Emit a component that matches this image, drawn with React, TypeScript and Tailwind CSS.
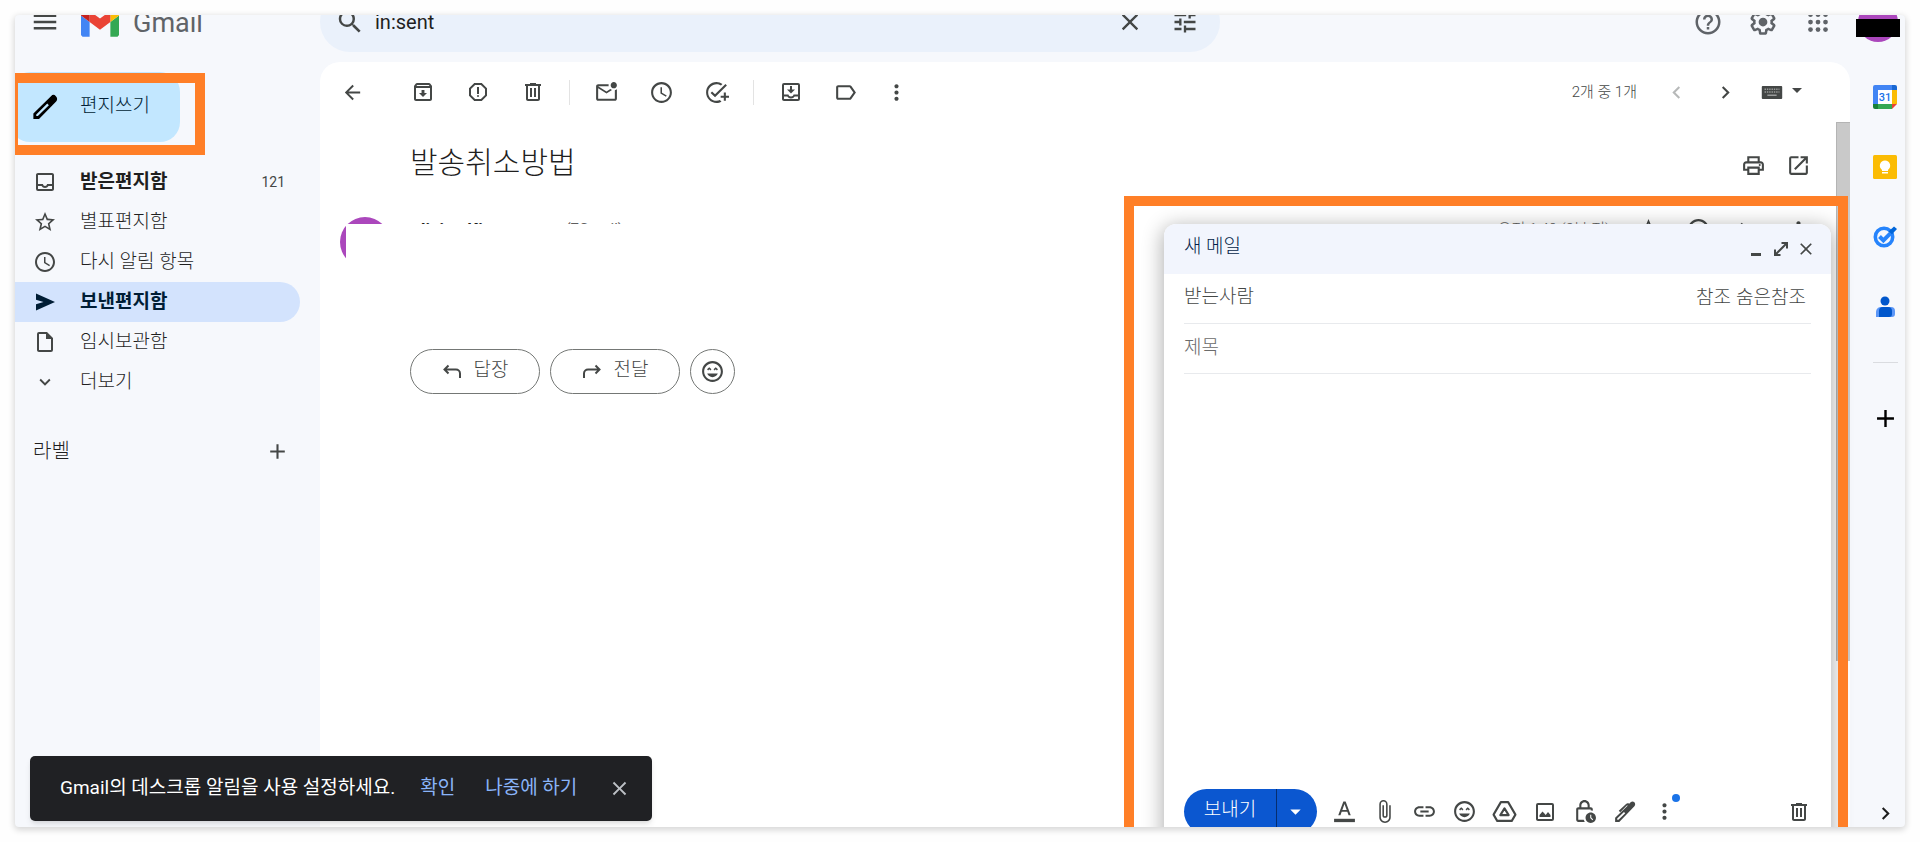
import React from 'react';
import {
    MdAccessTime,
    MdAdd,
    MdArrowBack,
    MdArrowDropDown,
    MdAttachFile,
    MdChevronLeft,
    MdChevronRight,
    MdClose,
    MdExpandMore,
    MdHelpOutline,
    MdLink,
    MdMenu,
    MdMoreVert,
    MdOpenInNew,
    MdOutlineAddTask,
    MdOutlineArchive,
    MdOutlineInbox,
    MdOutlineLabel,
    MdOutlineLockClock,
    MdOutlineMarkEmailUnread,
    MdOutlinePrint,
    MdOutlineReport,
    MdOutlineSentimentVerySatisfied,
    MdSearch,
    MdStarOutline,
    MdTune,
} from 'react-icons/md';

type IconProps = { className?: string };

const GmailLogo = () => (
    <svg viewBox="52 42 88 66" className="h-[29px] w-[38px]" aria-hidden="true">
        <path fill="#4285f4" d="M58 108h14V74L52 59v43c0 3.320 2.690 6 6 6" />
        <path fill="#34a853" d="M120 108h14c3.320 0 6-2.690 6-6V59l-20 15" />
        <path fill="#fbbc04" d="M120 48v26l20-15v-8c0-7.420-8.470-11.650-14.400-7.200" />
        <path fill="#ea4335" d="M72 74V48l24 18 24-18v26L96 92" />
        <path fill="#c5221f" d="M52 51v8l20 15V48l-5.600-4.200c-5.940-4.450-14.400-.22-14.400 7.200" />
    </svg>
);

const GearIcon = () => (
    <svg viewBox="0 0 24 24" className="size-[30px]" fill="currentColor" aria-hidden="true">
        <path
            fillRule="evenodd"
            d="M13.850 22.250h-3.700c-.74 0-1.360-.54-1.450-1.270l-.27-1.890c-.27-.14-.53-.29-.79-.46l-1.800.72c-.7.26-1.470-.03-1.810-.65L2.200 15.530c-.35-.66-.2-1.440.36-1.880l1.530-1.190c-.01-.15-.02-.3-.02-.46 0-.15.01-.31.02-.46l-1.520-1.190c-.59-.45-.74-1.260-.37-1.880l1.850-3.190c.34-.62 1.110-.9 1.790-.63l1.810.73c.26-.17.52-.32.78-.46l.27-1.910c.09-.7.710-1.250 1.440-1.250h3.700c.74 0 1.360.54 1.450 1.270l.27 1.890c.27.14.53.29.79.46l1.800-.72c.71-.26 1.480.03 1.820.65l1.840 3.180c.36.66.2 1.440-.36 1.880l-1.520 1.190c.01.15.02.3.02.46s-.01.31-.02.46l1.520 1.190c.56.45.72 1.230.37 1.860l-1.860 3.220c-.34.62-1.110.9-1.800.63l-1.800-.72c-.26.17-.52.32-.78.46l-.27 1.910c-.1.680-.72 1.220-1.460 1.220zm-3.230-2h2.760l.37-2.550.53-.22c.44-.18.88-.44 1.340-.78l.45-.34 2.380.96 1.380-2.400-2.030-1.580.07-.56c.03-.26.06-.51.06-.78s-.03-.53-.06-.78l-.07-.56 2.030-1.580-1.390-2.400-2.390.96-.45-.35c-.42-.32-.87-.58-1.330-.77l-.52-.22-.37-2.550h-2.760l-.37 2.550-.53.21c-.44.19-.88.44-1.340.79l-.45.33-2.380-.95-1.390 2.390 2.030 1.580-.07.56a7 7 0 0 0-.06.79c0 .26.02.53.06.78l.07.56-2.030 1.580 1.380 2.400 2.390-.96.45.35c.43.33.86.58 1.330.77l.53.22.38 2.550z"
        />
        <circle cx="12" cy="12" r="3.500" />
    </svg>
);

const AppsIcon = () => (
    <svg viewBox="0 0 24 24" className="size-[30px]" fill="currentColor" aria-hidden="true">
        {[6, 12, 18].map((cy) => [6, 12, 18].map((cx) => <circle key={`${cx}-${cy}`} cx={cx} cy={cy} r="1.900" />))}
    </svg>
);

const TrashIcon = ({ className = 'size-[24px]' }: IconProps) => (
    <svg viewBox="0 0 24 24" className={className} fill="currentColor" aria-hidden="true">
        <path fillRule="evenodd" d="M15 4V3H9v1H4v2h1v13c0 1.100.9 2 2 2h10c1.100 0 2-.9 2-2V6h1V4h-5zm2 15H7V6h10v13z" />
        <path d="M9 8h2v9H9zM13 8h2v9h-2z" />
    </svg>
);

const PencilIcon = () => (
    <svg viewBox="0 0 24 24" className="size-[30px]" fill="currentColor" aria-hidden="true">
        <path
            fillRule="evenodd"
            d="M20.700 3.300a2.700 2.700 0 0 0-3.900 0L2.700 17.100v4.400h4.500L20.900 7.500c1.200-1.200 1.100-3-.2-4.200zM6.300 19.200H5v-1.300l8.800-8.700 1.300 1.300z"
        />
    </svg>
);

const MoveToIcon = () => (
    <svg viewBox="0 0 24 24" className="size-[24px]" fill="currentColor" aria-hidden="true">
        <path
            fillRule="evenodd"
            d="M19 3H5a2 2 0 0 0-2 2v14c0 1.100.9 2 2 2h14a2 2 0 0 0 2-2V5a2 2 0 0 0-2-2zm0 16H5v-2.500h3.300c.8 1.200 2.100 2 3.700 2s2.900-.8 3.700-2H19V19zm0-4.500h-4.500c0 1.200-1.200 2-2.500 2s-2.500-.8-2.500-2H5V5h14v9.500z"
        />
        <path d="M16 9.500h-3V6h-2v3.500H8l4 4z" />
    </svg>
);

const KeyboardIcon = () => (
    <svg viewBox="0 0 22 14" className="h-[13px] w-[22px]" aria-hidden="true">
        <rect width="22" height="14" rx="1" fill="#444746" />
        <path d="M3 3.500h16M3 6.500h16" stroke="#9a9c9b" strokeWidth="1.500" strokeDasharray="1.500 1" />
        <path d="M6 10h10" stroke="#9a9c9b" strokeWidth="1.500" />
    </svg>
);

const SendIcon = () => (
    <svg viewBox="0 0 24 24" className="size-[24px]" fill="currentColor" aria-hidden="true">
        <path d="M3 3.500l19 8.500-19 8.500v-6.200l7.500-2.300L3 9.700z" />
    </svg>
);

const FileIcon = () => (
    <svg viewBox="0 0 24 24" className="size-[24px]" fill="currentColor" aria-hidden="true">
        <path fillRule="evenodd" d="M14 2H6a2 2 0 0 0-2 2v16c0 1.100.9 2 2 2h12a2 2 0 0 0 2-2V8zM6 20V4h7v5h5v11z" />
    </svg>
);

const ReplyIcon = ({ className = '' }: IconProps) => (
    <svg
        viewBox="0 0 20 16"
        className={`h-[16px] w-[20px] ${className}`}
        fill="none"
        stroke="currentColor"
        strokeWidth="2"
        aria-hidden="true"
    >
        <path d="M6.500 1.500L2.500 5.500l4 4M2.500 5.500H14a4 4 0 0 1 4 4V14" />
    </svg>
);

const TextFormatIcon = () => (
    <svg viewBox="0 0 24 24" className="size-[25px]" fill="currentColor" aria-hidden="true">
        <path d="M2 19h20v3.200H2z" />
        <path
            fillRule="evenodd"
            d="M10.900 2.500L6 15.500h2.100l1.200-3.300h5.400l1.200 3.300H18l-4.900-13zm-1 8L12 4.700l2.100 5.800z"
        />
    </svg>
);

const DriveIcon = () => (
    <svg
        viewBox="0 0 24 24"
        className="size-[25px]"
        fill="none"
        stroke="currentColor"
        strokeWidth="2"
        strokeLinejoin="round"
        aria-hidden="true"
    >
        <path d="M8.500 3h7L22.500 15l-3.500 6H5l-3.500-6z" />
        <path d="M12 9l4 6.500H8z" />
    </svg>
);

const PhotoIcon = () => (
    <svg viewBox="0 0 24 24" className="size-[24px]" fill="currentColor" aria-hidden="true">
        <path fillRule="evenodd" d="M19 3H5a2 2 0 0 0-2 2v14c0 1.100.9 2 2 2h14a2 2 0 0 0 2-2V5a2 2 0 0 0-2-2zm0 16H5V5h14z" />
        <path d="M6.500 17h11v-2l-2.500-3-2.300 3-1.700-2-1.500-1.500L6.500 15z" />
    </svg>
);

const SignatureIcon = () => (
    <svg viewBox="0 0 24 24" className="size-[25px]" fill="currentColor" aria-hidden="true">
        <path
            fillRule="evenodd"
            d="M21.500 3.200c-1.100-1.100-2.600-1-3.600 0l-1.400 1.300c-1-.7-2.200-.6-3 .2L6.500 11.200l1.400 1.400 6.600-6.600.5.500L3 18v4h4L21.500 7c1-1.100 1-2.700 0-3.800zM6.200 20H5v-1.200l6.500-6.400 1.200 1.200z"
        />
    </svg>
);

const FullscreenIcon = () => (
    <svg viewBox="0 0 16 16" className="size-[16px]" fill="none" stroke="currentColor" strokeWidth="2" aria-hidden="true">
        <path d="M8.500 2H14v5.500M14 2L2 14M7.500 14H2V8.500" />
    </svg>
);

const CalendarIcon = () => (
    <svg viewBox="0 0 24 24" className="size-[24px]" aria-hidden="true">
        <path fill="#fff" d="M4 4h15v15H4z" />
        <path fill="#4285f4" d="M2 0h17v5H5v14H0V2a2 2 0 0 1 2-2z" />
        <path fill="#1967d2" d="M19 0h3a2 2 0 0 1 2 2v3h-5z" />
        <path fill="#fbbc04" d="M19 5h5v14h-5z" />
        <path fill="#34a853" d="M5 19h14v5H5z" />
        <path fill="#188038" d="M0 19h5v5H2a2 2 0 0 1-2-2z" />
        <path fill="#ea4335" d="M19 19h5l-5 5z" />
        <text x="12" y="16" textAnchor="middle" fontSize="11" fontFamily="Roboto" fontWeight="500" fill="#1a73e8">
            31
        </text>
    </svg>
);

const KeepIcon = () => (
    <svg viewBox="0 0 24 24" className="size-[24px]" aria-hidden="true">
        <rect width="24" height="24" rx="1.500" fill="#fbbc04" />
        <path fill="#fff" d="M12 5.500a5.200 5.200 0 0 0-3 9.400V16h6v-1.100a5.200 5.200 0 0 0-3-9.400zM9 17h6v1.600H9z" />
    </svg>
);

const TasksIcon = () => (
    <svg viewBox="0 0 24 24" className="size-[24px]" fill="none" aria-hidden="true">
        <circle cx="11" cy="12" r="8.700" stroke="#2684fc" strokeWidth="3.600" />
        <path d="M6.500 11.500l3.900 3.900 7-7" stroke="#2684fc" strokeWidth="4" />
        <path d="M15.500 6.500L21 1.500l3 2.500-5 5.200z" fill="#0066da" />
    </svg>
);

const ContactsIcon = () => (
    <svg viewBox="0 0 24 24" className="size-[24px]" aria-hidden="true">
        <circle cx="12" cy="6" r="4.500" fill="#0057cc" />
        <path fill="#5c97f7" d="M9 12h9a4 4 0 0 1 4 4v3a3 3 0 0 1-3 3H3v-5a5 5 0 0 1 6-5z" />
        <path fill="#0057cc" d="M10 12h5a4 4 0 0 1 4 4v3a3 3 0 0 1-3 3H6v-6a4 4 0 0 1 4-4z" />
    </svg>
);

const IconButton: React.FC<{ label: string; className?: string; children: React.ReactNode }> = ({
    label,
    className = '',
    children,
}) => (
    <button
        type="button"
        aria-label={label}
        className={`flex size-[25px] shrink-0 items-center justify-center ${className}`}
    >
        {children}
    </button>
);

const folders = [
    { label: '받은편지함', icon: <MdOutlineInbox size={24} />, bold: true, count: 121 },
    { label: '별표편지함', icon: <MdStarOutline size={24} /> },
    { label: '다시 알림 항목', icon: <MdAccessTime size={24} /> },
    { label: '보낸편지함', icon: <SendIcon />, bold: true, active: true },
    { label: '임시보관함', icon: <FileIcon /> },
    { label: '더보기', icon: <MdExpandMore size={22} /> },
];

const Header = () => (
    <header className="-mt-[23px] mb-[10px] flex h-[60px] shrink-0 items-center text-[#444746]">
        <div className="flex w-[305px] shrink-0 items-center pl-[15px]">
            <button type="button" aria-label="기본 메뉴" className="flex w-[30px] justify-center">
                <MdMenu size={30} />
            </button>
            <a href="#" className="ml-[21px] flex items-center gap-[14px]">
                <GmailLogo />
                <span className="pt-px text-[27px] leading-[32px] text-[#5f6368]">Gmail</span>
            </a>
        </div>
        <form className="flex h-full max-w-[900px] flex-1 items-center rounded-[30px] bg-[#eaf1fb] pr-[23px] pl-[15px]">
            <IconButton label="메일 검색" className="w-[30px]">
                <MdSearch size={30} className="shrink-0" />
            </IconButton>
            <input
                type="text"
                aria-label="메일 검색"
                defaultValue="in:sent"
                className="ml-[10px] min-w-0 flex-1 bg-transparent text-[20px] text-[#1f1f1f] outline-none"
            />
            <IconButton label="검색어 지우기">
                <MdClose size={28} className="shrink-0" />
            </IconButton>
            <IconButton label="검색 옵션 표시" className="ml-[30px]">
                <MdTune size={28} className="shrink-0" />
            </IconButton>
        </form>
        <div className="ml-auto flex items-center gap-[15px] pr-[7px] text-[#5f6368]">
            <IconButton label="지원" className="w-[40px]">
                <MdHelpOutline size={30} className="shrink-0" />
            </IconButton>
            <IconButton label="설정" className="w-[40px]">
                <GearIcon />
            </IconButton>
            <IconButton label="Google 앱" className="w-[40px]">
                <AppsIcon />
            </IconButton>
            <button
                type="button"
                aria-label="Google 계정"
                className="relative ml-[5px] size-[40px] rounded-full bg-[#ab47bc]"
            >
                <span className="absolute inset-x-[-2px] top-[17px] h-[18px] bg-black" />
            </button>
        </div>
    </header>
);

const Sidebar = () => (
    <aside className="w-[305px] shrink-0">
        <div className="relative pt-[10px]">
            <button
                type="button"
                className="-ml-[5px] flex h-[70px] w-[170px] items-center gap-[20px] rounded-[20px] bg-[#c2e7ff] pl-[20px] text-[19px] text-[#001d35]"
            >
                <span className="text-black">
                    <PencilIcon />
                </span>
                <span className="pb-[2px] font-light">편지쓰기</span>
            </button>
            {/* highlight around the compose button */}
            <div className="absolute top-[11px] left-0 h-[82px] w-[190px] border-y-[10px] border-r-[10px] border-l-[3px] border-[#ff7f27]" />
        </div>
        <nav className="mt-[20px]">
            {folders.map((folder) => (
                <a
                    key={folder.label}
                    href="#"
                    className={`mr-[20px] flex h-[40px] items-center rounded-r-full pr-[15px] pl-[18px] ${
                        folder.active ? 'bg-[#d3e3fd] text-[#001d35]' : 'text-[#444746]'
                    }`}
                >
                    <span className="flex w-[24px] shrink-0 justify-center">{folder.icon}</span>
                    <span
                        className={`ml-[23px] flex-1 text-[19px] leading-[24px] ${
                            folder.bold ? 'font-bold' : 'font-light'
                        } ${folder.active ? 'text-[#001d35]' : 'text-[#1f1f1f]'}`}
                    >
                        {folder.label}
                    </span>
                    {folder.count && <span className="text-[14px]">{folder.count}</span>}
                </a>
            ))}
        </nav>
        <div className="mt-[34px] flex h-[30px] items-center justify-between pr-[30px] pl-[18px] text-[#444746]">
            <h2 className="text-[20px] font-light text-[#1f1f1f]">라벨</h2>
            <IconButton label="새 라벨 만들기">
                <MdAdd size={25} />
            </IconButton>
        </div>
    </aside>
);

const MailToolbar = () => (
    <div className="flex h-[60px] shrink-0 items-center pr-[41px] pl-[20px] text-[#444746]">
        <IconButton label="뒤로">
            <MdArrowBack size={23} />
        </IconButton>
        <div className="ml-[45px] flex items-center gap-[30px]">
            <IconButton label="보관처리">
                <MdOutlineArchive size={24} />
            </IconButton>
            <IconButton label="스팸 신고">
                <MdOutlineReport size={24} />
            </IconButton>
            <IconButton label="삭제">
                <TrashIcon />
            </IconButton>
        </div>
        <div className="mx-[24px] h-[25px] w-px bg-[#e3e3e3]" />
        <div className="flex items-center gap-[30px]">
            <IconButton label="읽지않음으로 표시">
                <MdOutlineMarkEmailUnread size={25} />
            </IconButton>
            <IconButton label="다시 알림">
                <MdAccessTime size={25} />
            </IconButton>
            <IconButton label="Tasks에 추가">
                <MdOutlineAddTask size={25} />
            </IconButton>
        </div>
        <div className="mx-[24px] h-[25px] w-px bg-[#e3e3e3]" />
        <div className="flex items-center">
            <IconButton label="이동">
                <MoveToIcon />
            </IconButton>
            <IconButton label="라벨" className="ml-[30px]">
                <MdOutlineLabel size={25} />
            </IconButton>
            <IconButton label="더보기" className="ml-[26px]">
                <MdMoreVert size={25} />
            </IconButton>
        </div>
        <span className="ml-auto text-[15px] font-light text-[#444746]">2개 중 1개</span>
        <div className="ml-[27px] flex items-center gap-[24px]">
            <IconButton label="이전" className="text-[#b7b9b9]">
                <MdChevronLeft size={25} />
            </IconButton>
            <IconButton label="다음">
                <MdChevronRight size={25} />
            </IconButton>
        </div>
        <button type="button" aria-label="입력 도구" className="ml-[23px] flex items-center">
            <KeyboardIcon />
            <MdArrowDropDown size={24} className="-mt-[4px] ml-[2px]" />
        </button>
    </div>
);

const MailView = () => (
    <main className="flex min-w-0 flex-1 flex-col rounded-t-[20px] bg-white">
        <MailToolbar />
        <div className="flex flex-1 items-start">
            <div className="min-w-0 flex-1 pl-[90px]">
                <div className="flex h-[86px] items-center justify-between pr-[25px]">
                    <h1 className="pb-[4px] text-[30px] leading-[40px] font-light text-[#1f1f1f]">발송취소방법</h1>
                    <div className="flex items-center gap-[20px] text-[#444746]">
                        <IconButton label="모두 인쇄">
                            <MdOutlinePrint size={25} />
                        </IconButton>
                        <IconButton label="새 창에서 열기">
                            <MdOpenInNew size={25} />
                        </IconButton>
                    </div>
                </div>
                <div className="relative -ml-[70px] flex h-[50px] items-start pt-[9px] pr-[25px] text-[15px] leading-[24px]">
                    <span className="absolute top-[9px] left-0 size-[50px] rounded-full bg-[#ab47bc]" />
                    <span className="ml-[76px] text-[17px] font-bold text-[#1f1f1f]">Jinjoo Kim</span>
                    <span className="ml-[68px] text-[#5e5e5e]">(7Gmail)</span>
                    <span className="ml-auto font-light text-[#5e5e5e]">오전 1:49 (3분 전)</span>
                    <span className="ml-[26px] flex gap-[25px] text-[#444746]">
                        <MdStarOutline size={25} />
                        <MdOutlineSentimentVerySatisfied size={25} />
                        <ReplyIcon className="mt-[5px]" />
                        <MdMoreVert size={25} className="ml-[5px]" />
                    </span>
                    {/* sender details are masked out */}
                    <span className="absolute top-[16px] right-0 left-[6px] h-[50px] bg-white" />
                </div>
                <div className="mt-[91px] flex gap-[10px] text-[19px] font-light text-[#444746]">
                    <button
                        type="button"
                        className="flex h-[45px] w-[130px] items-center justify-center gap-[12px] rounded-full border border-[#747775]"
                    >
                        <ReplyIcon />
                        <span className="pb-[2px]">답장</span>
                    </button>
                    <button
                        type="button"
                        className="flex h-[45px] w-[130px] items-center justify-center gap-[12px] rounded-full border border-[#747775]"
                    >
                        <ReplyIcon className="-scale-x-100" />
                        <span className="pb-[2px]">전달</span>
                    </button>
                    <button
                        type="button"
                        aria-label="이모지 반응 추가"
                        className="flex size-[45px] items-center justify-center rounded-full border border-[#747775]"
                    >
                        <MdOutlineSentimentVerySatisfied size={25} />
                    </button>
                </div>
            </div>
            <div className="h-[539px] w-[14px] shrink-0 border-t border-l border-[#b4b4b4] bg-[#c9c9c9]" />
        </div>
    </main>
);

const SidePanel = () => (
    <aside className="flex w-[55px] shrink-0 flex-col items-center pt-[23px] pb-px pl-[15px]">
        <div className="flex flex-col gap-[46px]">
            <a href="#" aria-label="캘린더">
                <CalendarIcon />
            </a>
            <a href="#" aria-label="Keep">
                <KeepIcon />
            </a>
            <a href="#" aria-label="Tasks">
                <TasksIcon />
            </a>
            <a href="#" aria-label="주소록">
                <ContactsIcon />
            </a>
        </div>
        <div className="my-[43px] h-px w-[25px] bg-[#dadce0]" />
        <IconButton label="부가기능 설치하기" className="text-black">
            <MdAdd size={29} className="shrink-0" />
        </IconButton>
        <IconButton label="측면 패널 숨기기" className="mt-auto text-[#1f1f1f]">
            <MdChevronRight size={25} />
        </IconButton>
    </aside>
);

const ComposeWindow = () => (
    <section
        aria-label="새 메일"
        className="absolute top-[209px] right-[74px] -bottom-[22px] flex w-[667px] flex-col rounded-t-[12px] bg-white shadow-[0_4px_20px_2px_rgba(0,0,0,0.3)]"
    >
        <div className="flex h-[50px] shrink-0 items-center justify-between rounded-t-[12px] bg-[#f2f5fd] pr-[13px] pl-[20px] text-[#444746]">
            <h2 className="pb-[4px] text-[19px] font-light text-[#041e49]">새 메일</h2>
            <div className="flex items-center">
                <IconButton label="최소화">
                    <span className="mt-[10px] h-[3px] w-[10px] bg-[#444746]" />
                </IconButton>
                <IconButton label="전체 화면">
                    <FullscreenIcon />
                </IconButton>
                <IconButton label="닫기">
                    <MdClose size={20} />
                </IconButton>
            </div>
        </div>
        <div className="mx-[20px] flex h-[50px] shrink-0 items-center justify-between border-b border-[#e8eaed] pr-[5px] text-[19px] font-light text-[#444746]">
            <label htmlFor="to" className="pb-[2px]">
                받는사람
            </label>
            <input id="to" type="text" className="min-w-0 flex-1 bg-transparent outline-none" />
            <div className="flex gap-[5px]">
                <button type="button">참조</button>
                <button type="button">숨은참조</button>
            </div>
        </div>
        <input
            type="text"
            aria-label="제목"
            placeholder="제목"
            className="mx-[20px] h-[50px] shrink-0 border-b border-[#e8eaed] pb-[2px] text-[19px] font-light outline-none placeholder:text-[#6b6b6b]"
        />
        <textarea aria-label="메일 본문" className="mx-[20px] min-h-0 flex-1 resize-none outline-none" />
        <div className="flex shrink-0 items-center pr-[20px] pb-[15px] pl-[20px] text-[#444746]">
            <div className="flex h-[45px] w-[133px] overflow-hidden rounded-full bg-[#0b57d0] text-white">
                <button type="button" className="flex-1 pb-[2px] text-[19px] font-light">
                    보내기
                </button>
                <button
                    type="button"
                    aria-label="전송 옵션 더보기"
                    className="flex w-[41px] items-center border-l border-[#062e6f] pl-[6px]"
                >
                    <MdArrowDropDown size={25} />
                </button>
            </div>
            <div className="ml-[15px] flex gap-[15px]">
                <IconButton label="서식 옵션">
                    <TextFormatIcon />
                </IconButton>
                <IconButton label="파일 첨부">
                    <MdAttachFile size={25} />
                </IconButton>
                <IconButton label="링크 삽입">
                    <MdLink size={25} />
                </IconButton>
                <IconButton label="그림 이모티콘 삽입">
                    <MdOutlineSentimentVerySatisfied size={25} />
                </IconButton>
                <IconButton label="드라이브를 사용하여 파일 삽입">
                    <DriveIcon />
                </IconButton>
                <IconButton label="사진 삽입">
                    <PhotoIcon />
                </IconButton>
                <IconButton label="비밀 모드 사용 설정/해제">
                    <MdOutlineLockClock size={25} />
                </IconButton>
                <IconButton label="서명 삽입">
                    <SignatureIcon />
                </IconButton>
                <IconButton label="옵션 더보기" className="relative">
                    <MdMoreVert size={25} />
                    <span className="absolute -top-[5px] -right-[3px] size-[8px] rounded-full bg-[#1a73e8]" />
                </IconButton>
            </div>
            <IconButton label="임시보관 메일 삭제" className="ml-auto">
                <TrashIcon />
            </IconButton>
        </div>
    </section>
);

const NotificationBar = () => (
    <div
        role="status"
        className="absolute bottom-[6px] left-[15px] flex h-[65px] items-center rounded-[5px] bg-[#202124] pr-[20px] pl-[30px] text-[19px] shadow-md"
    >
        <span className="text-white">Gmail의 데스크롭 알림을 사용 설정하세요.</span>
        <button type="button" className="ml-[25px] text-[#8ab4f8]">
            확인
        </button>
        <button type="button" className="ml-[30px] text-[#8ab4f8]">
            나중에 하기
        </button>
        <IconButton label="닫기" className="ml-[30px] text-[#bdc1c6]">
            <MdClose size={23} />
        </IconButton>
    </div>
);

const App: React.FC = () => {
    return (
        <div className="h-screen bg-[#fefefe] p-[15px] font-[Roboto,'Noto_Sans_CJK_KR',sans-serif]">
            <div className="relative flex h-full flex-col overflow-hidden rounded-[4px] bg-[#f6f8fc] shadow-[0_2px_6px_1px_rgba(0,0,0,0.16)]">
                <Header />
                <div className="flex min-h-0 flex-1">
                    <Sidebar />
                    <MailView />
                    <SidePanel />
                </div>
                <ComposeWindow />
                {/* highlight around the new message window */}
                <div className="pointer-events-none absolute top-[181px] right-[57px] bottom-0 w-[724px] border-x-[10px] border-t-[10px] border-[#ff7f27]" />
                <NotificationBar />
            </div>
        </div>
    );
};

export default App;
